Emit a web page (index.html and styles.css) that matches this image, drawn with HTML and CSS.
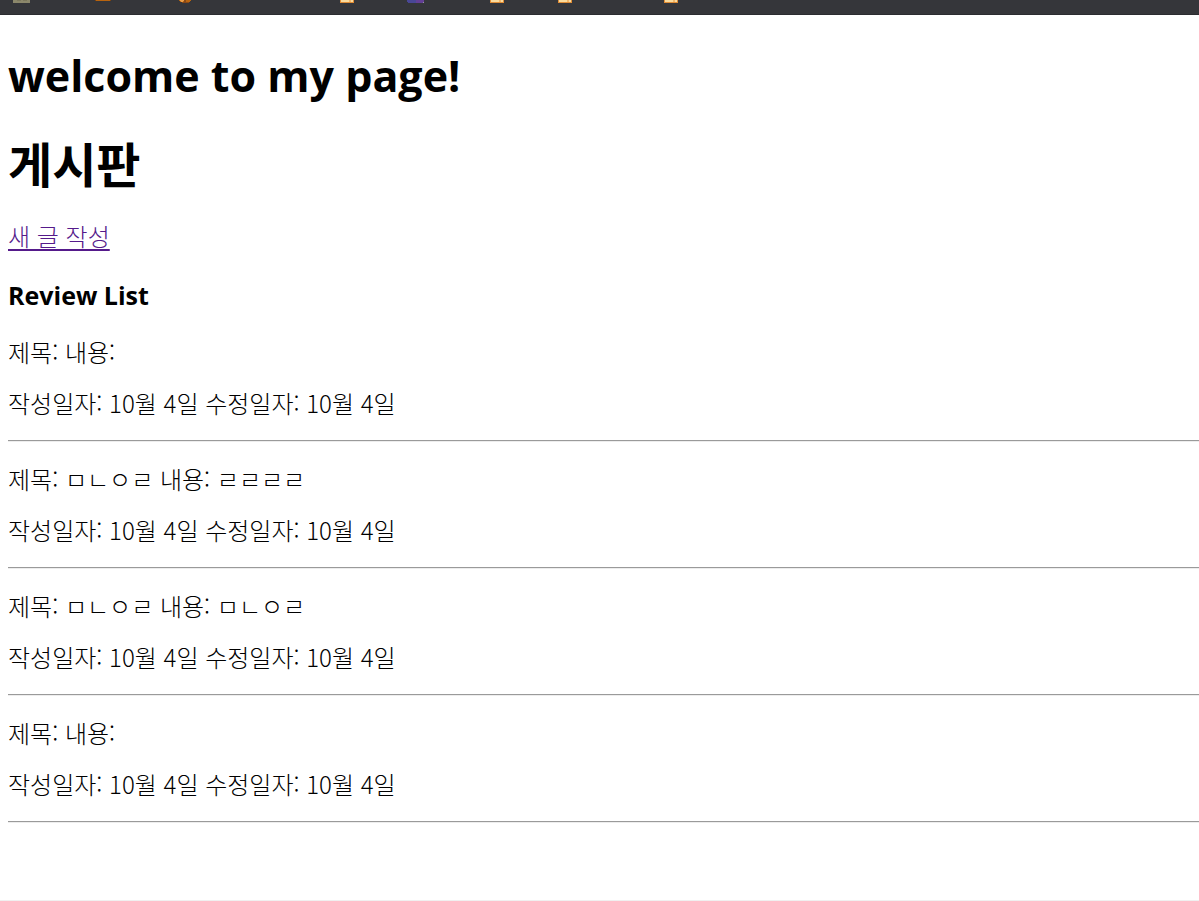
FILE: index.html
```html
<!DOCTYPE html>
<html lang="ko">
<head>
<meta charset="utf-8">
<title>게시판</title>
<link rel="stylesheet" href="styles.css">
</head>
<body>
<div class="bookmarks">
  <svg class="bookmark-icons" width="700" height="4" viewBox="0 0 700 4" shape-rendering="crispEdges" aria-hidden="true">
    <path fill="#8b876b" d="M13 0h17v3H13z"/><path fill="#7b775c" d="M17 0h4v1h-4zM23 0h4v1h-4z"/>
    <path fill="#7d430f" d="M95 0h16v1H95z"/><path fill="#b8640f" d="M96 0h14v1H96z"/>
    <path fill="#b8640f" d="M179 0h12v1h-1v1h-1v1h-7V2h-2V1h-1z"/><path fill="#e9a04c" d="M180 0h4v1h-1v1h-2V1h-1z"/><path fill="#874817" d="M182 2h7v1h-7zM184 0h2v2h-2z"/>
    <path fill="#494796" d="M407 0h9v3h-8V2h-1z"/><path fill="#633f96" d="M416 0h8v3h-8z"/><path fill="#999" d="M423 2h1v1h-1z"/>
    <g id="folder"><path fill="#e18d35" d="M340 0h14v3h-14z"/><path fill="#fadb9d" d="M341 0h12v2h-12z"/><path fill="#f2b669" d="M349 0h2v2h-2z"/></g>
    <use href="#folder" x="150"/><use href="#folder" x="218"/><use href="#folder" x="324"/>
  </svg>
</div>
<main class="page">
  <h1 class="title">welcome to my page!</h1>
  <h1 class="title title-ko">게시판</h1>
  <a class="new-post" href="#new">새 글 작성</a>
  <h3 class="subtitle">Review List</h3>
  <div class="reviews">
    <article class="review"><p>제목: 내용:</p><p>작성일자: 10월 4일 수정일자: 10월 4일</p></article>
    <hr class="rule">
    <article class="review"><p>제목: ㅁㄴㅇㄹ 내용: ㄹㄹㄹㄹ</p><p>작성일자: 10월 4일 수정일자: 10월 4일</p></article>
    <hr class="rule">
    <article class="review"><p>제목: ㅁㄴㅇㄹ 내용: ㅁㄴㅇㄹ</p><p>작성일자: 10월 4일 수정일자: 10월 4일</p></article>
    <hr class="rule">
    <article class="review"><p>제목: 내용:</p><p>작성일자: 10월 4일 수정일자: 10월 4일</p></article>
    <hr class="rule">
  </div>
</main>
</body>
</html>
```
FILE: styles.css
```css
* { box-sizing: border-box; }
body {
  margin: 0;
  min-height: 100vh;
  display: flex;
  flex-direction: column;
  background: #fff;
  color: #000;
  font-family: "Noto Sans CJK KR", sans-serif;
  font-size: 24px;
  font-weight: 300;
  line-height: 27px;
  border-bottom: 1px solid #f0f0f0;
}
.bookmarks {
  height: 15px;
  background: #35363a;
  border-bottom: 1px solid #2b2c30;
  overflow: hidden;
}
.bookmark-icons { display: block; }
.page { padding: 30px 0 0 8px; }
.title {
  margin: 0 0 24px;
  font: 700 43px/62px "Open Sans", sans-serif;
}
.title-ko {
  margin-bottom: 29px;
  font: 700 48px/62px "Noto Sans CJK KR", sans-serif;
}
.new-post {
  display: inline-block;
  color: #551a8b;
  text-underline-offset: 3px;
}
.subtitle {
  margin: 28px 0 25px;
  font: 700 25px/36px "Open Sans", sans-serif;
}
.review {
  display: flex;
  flex-direction: column;
  gap: 24px;
  padding-bottom: 24px;
}
.review p { margin: 0; }
.rule {
  margin: 0 0 23px;
  border: 0;
  border-top: 1px solid #9a9a9a;
  border-bottom: 1px solid #ededed;
}
```
